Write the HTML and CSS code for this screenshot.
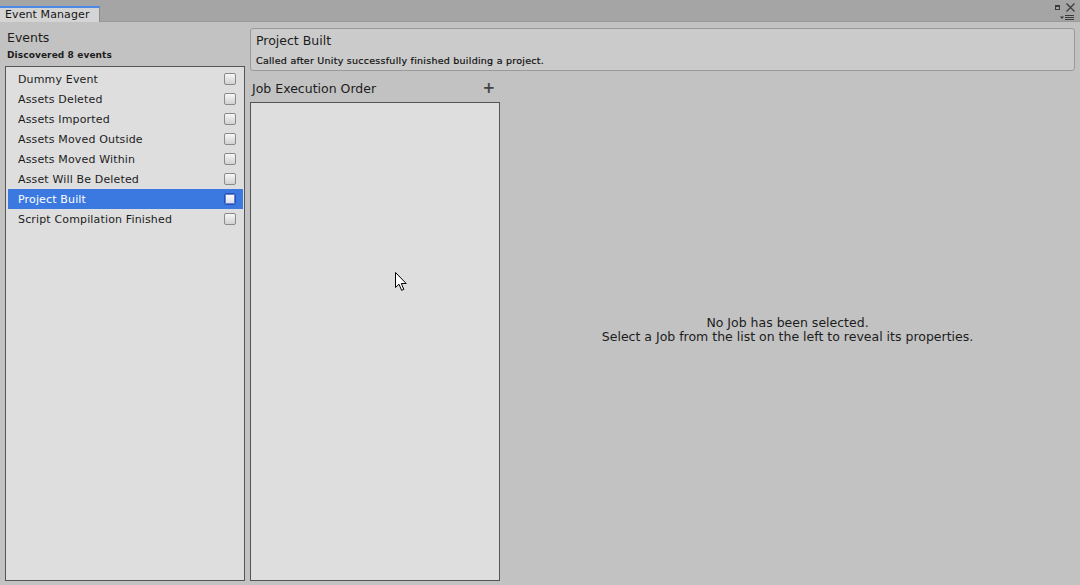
FILE: index.html
```html
<!DOCTYPE html>
<html>
<head>
<meta charset="utf-8">
<link rel="stylesheet" href="styles.css">
</head>
<body>
<div class="tabbar">
  <div class="tab">Event Manager</div>
  <div class="winctl">
    <div class="ctl-top">
      <span class="maxbox"></span>
      <svg class="closex" width="9" height="9" viewBox="0 0 9 9"><path d="M0.5 0.5 L8.5 8.5 M8.5 0.5 L0.5 8.5" stroke="#3a3a3a" stroke-width="1.2" fill="none"/></svg>
    </div>
    <svg class="menuicon" width="15" height="6" viewBox="0 0 15 6"><path d="M0 1.5 H4 L2 4 Z" fill="#3a3a3a"/><path d="M5 0.5 H14 M5 2.5 H14 M5 4.5 H14" stroke="#3a3a3a" stroke-width="1"/></svg>
  </div>
</div>
<div class="window">
  <div class="left">
    <div class="title">Events</div>
    <div class="sub">Discovered 8 events</div>
    <div class="list">
      <div class="row"><span>Dummy Event</span><span class="check"></span></div>
      <div class="row"><span>Assets Deleted</span><span class="check"></span></div>
      <div class="row"><span>Assets Imported</span><span class="check"></span></div>
      <div class="row"><span>Assets Moved Outside</span><span class="check"></span></div>
      <div class="row"><span>Assets Moved Within</span><span class="check"></span></div>
      <div class="row"><span>Asset Will Be Deleted</span><span class="check"></span></div>
      <div class="row selected"><span>Project Built</span><span class="check"></span></div>
      <div class="row"><span>Script Compilation Finished</span><span class="check"></span></div>
    </div>
  </div>
  <div class="main">
    <div class="infobox">
      <div class="infotitle">Project Built</div>
      <div class="infodesc">Called after Unity successfully finished building a project.</div>
    </div>
    <div class="content">
      <div class="jobs">
        <div class="jobhead"><span>Job Execution Order</span><span class="plus">+</span></div>
        <div class="joblist"></div>
      </div>
      <div class="detail">
        <div>No Job has been selected.</div>
        <div>Select a Job from the list on the left to reveal its properties.</div>
      </div>
    </div>
  </div>
</div>
<svg class="cursor" width="13" height="20" viewBox="0 0 13 20"><path d="M0.5 0.5 L0.5 15.5 L4 12.2 L6.6 18.3 L8.8 17.4 L6.3 11.5 L11.2 11.5 Z" fill="#fff" stroke="#000" stroke-width="1" stroke-linejoin="miter"/></svg>
</body>
</html>
```

FILE: styles.css
```css
html, body {
  margin: 0;
  padding: 0;
  width: 1080px;
  height: 585px;
  overflow: hidden;
}
body {
  font-family: "DejaVu Sans", Verdana, sans-serif;
  color: #1c1c1c;
  background: #c2c2c2;
  display: flex;
  flex-direction: column;
  position: relative;
}
.tabbar {
  height: 22px;
  flex: none;
  background: #a5a5a5;
  border-bottom: 1px solid #9a9a9a;
  box-sizing: border-box;
  display: flex;
  align-items: flex-end;
  justify-content: space-between;
}
.tab {
  height: 16px;
  width: 100px;
  box-sizing: border-box;
  margin-bottom: -1px;
  background: #d4d4d4;
  border-top: 2px solid #4d8ae6;
  border-right: 1px solid #8c8c8c;
  font-size: 11px;
  line-height: 14px;
  padding-left: 5px;
  letter-spacing: 0.1px;
  color: #161616;
}
.winctl {
  align-self: stretch;
  display: flex;
  flex-direction: column;
  align-items: flex-end;
  padding: 3px 5px 0 0;
}
.ctl-top {
  display: flex;
  align-items: center;
  gap: 6px;
  height: 9px;
}
.maxbox {
  width: 5px;
  height: 5px;
  box-sizing: border-box;
  border: 1px solid #3a3a3a;
  border-top-width: 2px;
  margin-top: -1px;
}
.menuicon {
  margin-top: 3px;
}
.window {
  flex: 1;
  display: flex;
  gap: 5px;
  padding: 6px 5px 4px 5px;
  min-height: 0;
}
.left {
  width: 240px;
  display: flex;
  flex-direction: column;
}
.title {
  font-size: 12.5px;
  line-height: 18px;
  padding: 1px 0 0 2px;
}
.sub {
  font-size: 9px;
  font-weight: bold;
  line-height: 16px;
  padding-left: 2px;
  margin-bottom: 3px;
  letter-spacing: 0.1px;
}
.list {
  flex: 1;
  background: #dedede;
  border: 1px solid #555;
  padding: 2px 1px 0 2px;
}
.row {
  height: 20px;
  display: flex;
  align-items: center;
  justify-content: space-between;
  padding: 0 7px 0 10px;
  font-size: 11px;
  letter-spacing: 0.15px;
}
.row.selected {
  background: #3b79e1;
  color: #fff;
}
.check {
  width: 12px;
  height: 12px;
  box-sizing: border-box;
  border: 1px solid #8a8a8a;
  border-radius: 2px;
  background: linear-gradient(#f6f6f6, #d2d2d2);
}
.row.selected .check {
  border-color: #2a4fb0;
  box-shadow: inset 0 0 0 1px #5b82e0;
  background: linear-gradient(#ffffff, #d8d8e4);
}
.main {
  flex: 1;
  display: flex;
  flex-direction: column;
  min-width: 0;
}
.infobox {
  height: 43px;
  box-sizing: border-box;
  background: #cbcbcb;
  border: 1px solid #9a9a9a;
  border-radius: 3px;
  padding: 4px 5px 0 5px;
}
.infotitle {
  font-size: 12.5px;
  line-height: 16px;
}
.infodesc {
  margin-top: 5px;
  font-size: 9.5px;
  line-height: 14px;
  letter-spacing: 0.25px;
  color: #111;
  -webkit-text-stroke: 0.2px #111;
}
.content {
  flex: 1;
  display: flex;
  margin-top: 8px;
  min-height: 0;
}
.jobs {
  width: 250px;
  display: flex;
  flex-direction: column;
}
.jobhead {
  height: 18px;
  display: flex;
  align-items: center;
  justify-content: space-between;
  padding: 0 5px 0 2px;
  font-size: 12.5px;
  margin-bottom: 5px;
}
.plus {
  font-size: 15px;
  font-weight: bold;
  color: #444;
  line-height: 18px;
}
.joblist {
  flex: 1;
  background: #dedede;
  border: 1px solid #555;
}
.detail {
  flex: 1;
  display: flex;
  flex-direction: column;
  align-items: center;
  justify-content: center;
  font-size: 12.5px;
  line-height: 14px;
  text-align: center;
}
.cursor {
  position: absolute;
  left: 395px;
  top: 272px;
}
```
